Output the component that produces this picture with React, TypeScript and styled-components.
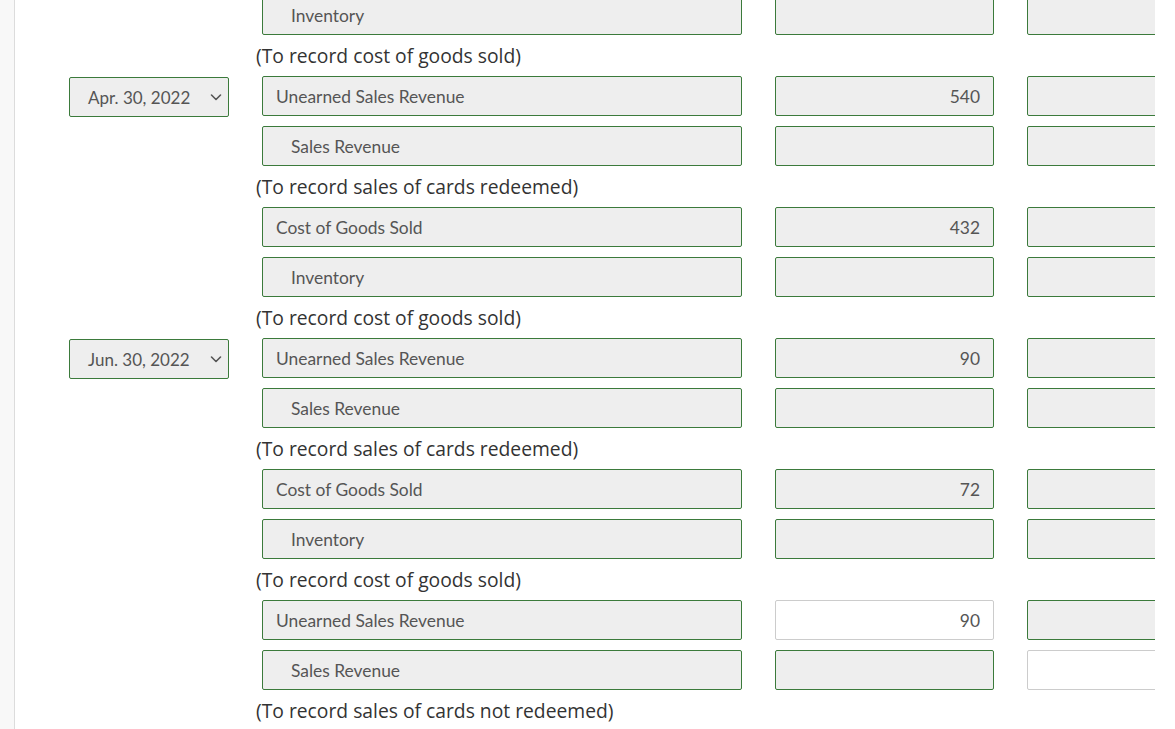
import React from "react";
import styled, { createGlobalStyle } from "styled-components";

const Global = createGlobalStyle`
  html, body { margin: 0; padding: 0; background: #fff; overflow: hidden; }
  body { font-family: Lato, "Liberation Sans", sans-serif; }
`;

const Page = styled.div`
  display: flex;
  height: 729px;
  overflow: hidden;
`;

const SideStrip = styled.div`
  width: 14px;
  flex: none;
  background: #f8f8f8;
  border-right: 1px solid #dcdcdc;
`;

const Content = styled.div`
  width: 1140px;
  flex: none;
  overflow: hidden;
  padding-left: 54px;
  box-sizing: border-box;
`;

const Stack = styled.div`
  display: flex;
  flex-direction: column;
  margin-top: -5px;
  width: max-content;
`;

const Line = styled.div<{ $gapAfter: boolean }>`
  display: grid;
  grid-template-columns: 160px 480px 219px 219px;
  column-gap: 33px;
  height: 40px;
  margin-bottom: ${(p) => (p.$gapAfter ? "10px" : "0")};
`;

const Field = styled.div<{ $white?: boolean; $align?: "left" | "right"; $indent?: boolean }>`
  box-sizing: border-box;
  height: 40px;
  border: 1px solid ${(p) => (p.$white ? "#cccccc" : "#3b7a3b")};
  border-radius: 2px;
  background: ${(p) => (p.$white ? "#ffffff" : "#eeeeee")};
  color: #555;
  font-family: Lato, "Liberation Sans", sans-serif;
  font-size: 17.4px;
  display: flex;
  align-items: center;
  justify-content: ${(p) => (p.$align === "right" ? "flex-end" : "flex-start")};
  padding: 0 13px 0 ${(p) => (p.$indent ? "28px" : "13px")};
  white-space: nowrap;
`;

const DateSelect = styled.div`
  box-sizing: border-box;
  height: 40px;
  margin-top: 1px;
  border: 1px solid #3b7a3b;
  border-radius: 2px;
  background: #eeeeee;
  color: #555;
  font-family: Lato, "Liberation Sans", sans-serif;
  font-size: 17px;
  display: flex;
  align-items: center;
  justify-content: space-between;
  padding: 0 6px 0 18px;
`;

const Chevron = styled.svg`
  width: 12px;
  height: 12px;
  flex: none;
`;

const Note = styled.div`
  height: 41px;
  display: flex;
  align-items: center;
  margin-left: 187px;
  font-family: "Open Sans", "DejaVu Sans", sans-serif;
  font-size: 19.3px;
  color: #333;
  white-space: nowrap;
`;

type Item =
  | {
      kind: "line";
      date?: string;
      account: string;
      indent?: boolean;
      debit?: string;
      credit?: string;
      debitWhite?: boolean;
      creditWhite?: boolean;
    }
  | { kind: "note"; text: string };

const items: Item[] = [
  { kind: "line", account: "Inventory", indent: true },
  { kind: "note", text: "(To record cost of goods sold)" },
  { kind: "line", date: "Apr. 30, 2022", account: "Unearned Sales Revenue", debit: "540" },
  { kind: "line", account: "Sales Revenue", indent: true },
  { kind: "note", text: "(To record sales of cards redeemed)" },
  { kind: "line", account: "Cost of Goods Sold", debit: "432" },
  { kind: "line", account: "Inventory", indent: true },
  { kind: "note", text: "(To record cost of goods sold)" },
  { kind: "line", date: "Jun. 30, 2022", account: "Unearned Sales Revenue", debit: "90" },
  { kind: "line", account: "Sales Revenue", indent: true },
  { kind: "note", text: "(To record sales of cards redeemed)" },
  { kind: "line", account: "Cost of Goods Sold", debit: "72" },
  { kind: "line", account: "Inventory", indent: true },
  { kind: "note", text: "(To record cost of goods sold)" },
  { kind: "line", account: "Unearned Sales Revenue", debit: "90", debitWhite: true },
  { kind: "line", account: "Sales Revenue", indent: true, creditWhite: true },
  { kind: "note", text: "(To record sales of cards not redeemed)" },
];

const ChevronIcon = () => (
  <Chevron viewBox="0 0 12 12">
    <path d="M1.5 4 L6 8.5 L10.5 4" fill="none" stroke="#555" strokeWidth="1.6" strokeLinecap="round" strokeLinejoin="round" />
  </Chevron>
);

export default function App() {
  return (
    <>
      <Global />
      <Page>
        <SideStrip />
        <Content>
          <Stack>
            {items.map((it, i) => {
              if (it.kind === "note") return <Note key={i}>{it.text}</Note>;
              const next = items[i + 1];
              return (
                <Line key={i} $gapAfter={!!next && next.kind === "line"}>
                  {it.date ? (
                    <DateSelect>
                      <span>{it.date}</span>
                      <ChevronIcon />
                    </DateSelect>
                  ) : (
                    <div />
                  )}
                  <Field $indent={it.indent}>{it.account}</Field>
                  <Field $align="right" $white={it.debitWhite}>{it.debit ?? ""}</Field>
                  <Field $align="right" $white={it.creditWhite}>{it.credit ?? ""}</Field>
                </Line>
              );
            })}
          </Stack>
        </Content>
      </Page>
    </>
  );
}
